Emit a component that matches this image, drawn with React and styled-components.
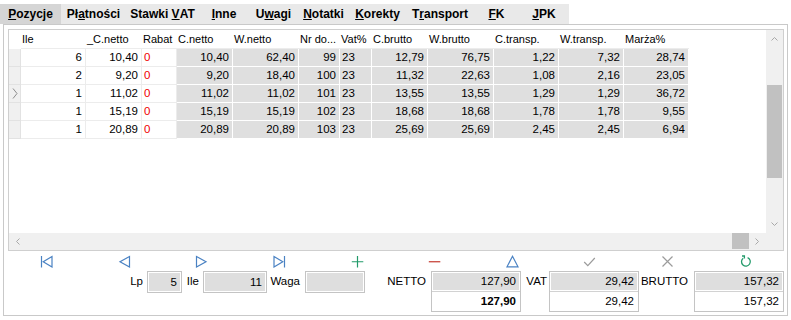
import React from "react"
import styled, { createGlobalStyle } from "styled-components"

const GlobalStyle = createGlobalStyle`
  html, body {
    margin: 0;
    padding: 0;
    background: #fff;
  }
  body {
    font-family: "Liberation Sans", Arial, sans-serif;
    font-size: 11px;
    color: #000;
  }
`

const Page = styled.div`
  width: 791px;
  height: 320px;
  overflow: hidden;
`

const TabBar = styled.div`
  display: flex;
  margin-top: 4px;
  width: 569px;
  height: 20px;
  background: #e9e9e9;
`

const Tab = styled.div`
  width: ${(p) => p.$w}px;
  display: flex;
  align-items: center;
  justify-content: center;
  font-size: 12px;
  font-weight: bold;
  white-space: pre;
  background: ${(p) => (p.$active ? "#d5d5d5" : "transparent")};
  u {
    text-decoration: underline;
  }
`

const Panel = styled.div`
  margin-left: 3px;
  width: 785px;
  height: 292px;
  box-sizing: border-box;
  border: 1px solid #c9c9c9;
  padding: 4px 3px 3px 4px;
  display: flex;
  flex-direction: column;
`

const GridBox = styled.div`
  height: 222px;
  flex-shrink: 0;
  box-sizing: border-box;
  border: 1px solid #cfcfcf;
  display: grid;
  grid-template-columns: 1fr 17px;
  grid-template-rows: 1fr 17px;
`

const Content = styled.div`
  overflow: hidden;
  background: #fff;
`

const Row = styled.div`
  display: flex;
  height: ${(p) => (p.$head ? 19 : 18)}px;
`

const Cell = styled.div`
  box-sizing: border-box;
  width: ${(p) => p.$w}px;
  height: 100%;
  flex-shrink: 0;
  line-height: 17px;
  font-size: 11.5px;
  white-space: nowrap;
  overflow: hidden;
  text-align: ${(p) => p.$align};
  padding: ${(p) => (p.$align === "right" ? "0 3px 0 0" : "0 0 0 2px")};
  color: ${(p) => (p.$red ? "#f00000" : "#000")};
  background: ${(p) => (p.$shade ? "#dfdfdf" : "#fff")};
  border-right: 1px solid ${(p) => (p.$shade ? "#fff" : "#ececec")};
  border-bottom: 1px solid ${(p) => (p.$shade ? "#fff" : "#ececec")};
`

const HeadCell = styled.div`
  box-sizing: border-box;
  width: ${(p) => p.$w}px;
  flex-shrink: 0;
  line-height: 18px;
  padding-left: 1px;
  white-space: nowrap;
  overflow: hidden;
  border-bottom: 1px solid ${(p) => (p.$blank ? "transparent" : "#ececec")};
`

const Indicator = styled.div`
  box-sizing: border-box;
  width: 12px;
  height: 100%;
  flex-shrink: 0;
  background: #f0f0f0;
  border-right: 1px solid #e2e2e2;
  border-bottom: 1px solid #e2e2e2;
  display: flex;
  align-items: center;
  justify-content: center;
`

const VScroll = styled.div`
  background: #f0f0f0;
  display: flex;
  flex-direction: column;
`

const HScroll = styled.div`
  background: #f0f0f0;
  display: flex;
`

const Corner = styled.div`
  background: #f0f0f0;
`

const Arrow = styled.div`
  width: 17px;
  height: 17px;
  flex-shrink: 0;
  display: flex;
  align-items: center;
  justify-content: center;
`

const Track = styled.div`
  flex: 1;
  display: flex;
  flex-direction: ${(p) => (p.$vertical ? "column" : "row")};
`

const Thumb = styled.div`
  background: #c1c1c1;
  ${(p) =>
    p.$vertical
      ? "margin: 38px 1px 0 1px; height: 93px;"
      : "margin: 0 0 1px auto; width: 17px;"}
`

const IconRow = styled.div`
  height: 20px;
  flex-shrink: 0;
  display: grid;
  grid-template-columns: repeat(10, 1fr);
  align-items: center;
  justify-items: center;
`

const Fields = styled.div`
  display: flex;
  align-items: flex-start;
  padding-left: 117px;
  font-size: 11.5px;
`

const Label = styled.div`
  width: ${(p) => p.$w}px;
  height: 21px;
  line-height: 21px;
  text-align: right;
  padding-right: ${(p) => p.$pr}px;
  box-sizing: border-box;
  flex-shrink: 0;
`

const FieldBox = styled.div`
  width: ${(p) => p.$w}px;
  box-sizing: border-box;
  flex-shrink: 0;
  border: 1px solid #c4c4c4;
  display: flex;
  flex-direction: column;
`

const FieldCell = styled.div`
  height: ${(p) => p.$h}px;
  line-height: ${(p) => p.$h}px;
  text-align: right;
  padding-right: 4px;
  font-weight: ${(p) => (p.$bold ? "bold" : "normal")};
  background: ${(p) => (p.$grey ? "#dedede" : "#fff")};
  box-shadow: ${(p) => (p.$grey ? "inset 0 0 0 1px #fff" : "none")};
  border-top: ${(p) => (p.$divided ? "1px solid #d2d2d2" : "none")};
`

const tabs = [
  ["Pozycje", 0, 61],
  ["Płatności", 2, 65],
  ["Stawki VAT", 7, 73],
  ["Inne", 0, 50],
  ["Uwagi", 1, 49],
  ["Notatki", 0, 51],
  ["Korekty", 0, 57],
  ["Transport", 1, 68],
  ["FK", 0, 45],
  ["JPK", 0, 50],
]

const columns = [
  { title: "Ile", w: 65, align: "right" },
  { title: "_C.netto", w: 56, align: "right" },
  { title: "Rabat", w: 35, align: "left", red: true },
  { title: "C.netto", w: 56, align: "right", shade: true },
  { title: "W.netto", w: 66, align: "right", shade: true },
  { title: "Nr do...", w: 41, align: "right", shade: true },
  { title: "Vat%", w: 32, align: "left", shade: true },
  { title: "C.brutto", w: 56, align: "right", shade: true },
  { title: "W.brutto", w: 66, align: "right", shade: true },
  { title: "C.transp.", w: 65, align: "right", shade: true },
  { title: "W.transp.", w: 65, align: "right", shade: true },
  { title: "Marża%", w: 65, align: "right", shade: true },
]

const rows = [
  ["6", "10,40", "0", "10,40", "62,40", "99", "23", "12,79", "76,75", "1,22", "7,32", "28,74"],
  ["2", "9,20", "0", "9,20", "18,40", "100", "23", "11,32", "22,63", "1,08", "2,16", "23,05"],
  ["1", "11,02", "0", "11,02", "11,02", "101", "23", "13,55", "13,55", "1,29", "1,29", "36,72"],
  ["1", "15,19", "0", "15,19", "15,19", "102", "23", "18,68", "18,68", "1,78", "1,78", "9,55"],
  ["1", "20,89", "0", "20,89", "20,89", "103", "23", "25,69", "25,69", "2,45", "2,45", "6,94"],
]

const BLUE = "#4a82c3"
const GREEN = "#229a6a"
const GREY = "#9b9b9b"

function Icon({ children, color }) {
  return (
    <svg width="13" height="13" viewBox="0 0 13 13" fill="none" stroke={color} strokeWidth="1.2" strokeLinejoin="miter">
      {children}
    </svg>
  )
}

const icons = [
  <Icon color={BLUE} key="first"><path d="M1.5 1v11.5" /><path d="M12 1.5L3.2 6.75 12 12z" /></Icon>,
  <Icon color={BLUE} key="prev"><path d="M11.5 1.5L2 6.75 11.5 12z" /></Icon>,
  <Icon color={BLUE} key="next"><path d="M1.5 1.5L11 6.75 1.5 12z" /></Icon>,
  <Icon color={BLUE} key="last"><path d="M1 1.5L9.8 6.75 1 12z" /><path d="M11.5 1v11.5" /></Icon>,
  <Icon color={GREEN} key="add"><path d="M6.5 1v11.5M0.8 6.75h11.5" /></Icon>,
  <Icon color="#c4382e" key="del"><path d="M0.8 6.75h11.5" /></Icon>,
  <Icon color={BLUE} key="edit"><path d="M6.5 1.3L12 11.8H1z" /></Icon>,
  <Icon color={GREY} key="ok"><path d="M1.2 7l3.6 3.6L11.8 3" /></Icon>,
  <Icon color={GREY} key="cancel"><path d="M1.5 1.5l10 10M11.5 1.5l-10 10" /></Icon>,
  <Icon color={GREEN} key="refresh">
    <path d="M4.2 3.2A4.4 4.4 0 1 0 8.6 2.6" strokeWidth="1.3" />
    <path d="M3 1h2.4v2.6" strokeWidth="1.3" />
  </Icon>,
]

function Chevron({ d, w = 7, h = 5 }) {
  return (
    <svg width={w} height={h} viewBox={`0 0 ${w} ${h}`} fill="none" stroke="#a8a8a8" strokeWidth="1">
      <path d={d} />
    </svg>
  )
}

function TabLabel({ text, at }) {
  return (
    <>
      {text.slice(0, at)}
      <u>{text[at]}</u>
      {text.slice(at + 1)}
    </>
  )
}

export default function App() {
  return (
    <Page>
      <GlobalStyle />
      <TabBar>
        {tabs.map(([text, at, w], i) => (
          <Tab key={text} $w={w} $active={i === 0}>
            <TabLabel text={text} at={at} />
          </Tab>
        ))}
      </TabBar>
      <Panel>
        <GridBox>
          <Content>
            <Row $head>
              <HeadCell $w={12} $blank />
              {columns.map((c) => (
                <HeadCell key={c.title} $w={c.w}>{c.title}</HeadCell>
              ))}
            </Row>
            {rows.map((r, i) => (
              <Row key={i}>
                <Indicator>
                  {i === 2 && (
                    <svg width="6" height="11" viewBox="0 0 6 11" fill="none" stroke="#8c8c8c" strokeWidth="1">
                      <path d="M1 0.5l4 5-4 5" />
                    </svg>
                  )}
                </Indicator>
                {r.map((v, j) => (
                  <Cell key={j} $w={columns[j].w} $align={columns[j].align} $shade={columns[j].shade} $red={columns[j].red}>
                    {v}
                  </Cell>
                ))}
              </Row>
            ))}
          </Content>
          <VScroll>
            <Arrow><Chevron d="M0.5 4.5l3-3 3 3" /></Arrow>
            <Track $vertical>
              <Thumb $vertical />
            </Track>
            <Arrow><Chevron d="M0.5 0.5l3 3 3-3" /></Arrow>
          </VScroll>
          <HScroll>
            <Arrow><Chevron w={5} h={7} d="M4.5 0.5l-3 3 3 3" /></Arrow>
            <Track>
              <Thumb />
            </Track>
            <Arrow><Chevron w={5} h={7} d="M0.5 0.5l3 3-3 3" /></Arrow>
          </HScroll>
          <Corner />
        </GridBox>
        <IconRow>{icons}</IconRow>
        <Fields>
          <Label $w={22} $pr={4}>Lp</Label>
          <FieldBox $w={35}>
            <FieldCell $h={20} $grey>5</FieldCell>
          </FieldBox>
          <Label $w={21} $pr={4}>Ile</Label>
          <FieldBox $w={64}>
            <FieldCell $h={20} $grey>11</FieldCell>
          </FieldBox>
          <Label $w={38} $pr={5}>Waga</Label>
          <FieldBox $w={60}>
            <FieldCell $h={20} $grey></FieldCell>
          </FieldBox>
          <Label $w={66} $pr={5}>NETTO</Label>
          <FieldBox $w={90}>
            <FieldCell $h={19} $grey>127,90</FieldCell>
            <FieldCell $h={19} $divided $bold>127,90</FieldCell>
          </FieldBox>
          <Label $w={28} $pr={2}>VAT</Label>
          <FieldBox $w={90}>
            <FieldCell $h={19} $grey>29,42</FieldCell>
            <FieldCell $h={19} $divided>29,42</FieldCell>
          </FieldBox>
          <Label $w={55} $pr={6}>BRUTTO</Label>
          <FieldBox $w={90}>
            <FieldCell $h={19} $grey>157,32</FieldCell>
            <FieldCell $h={19} $divided>157,32</FieldCell>
          </FieldBox>
        </Fields>
      </Panel>
    </Page>
  )
}
